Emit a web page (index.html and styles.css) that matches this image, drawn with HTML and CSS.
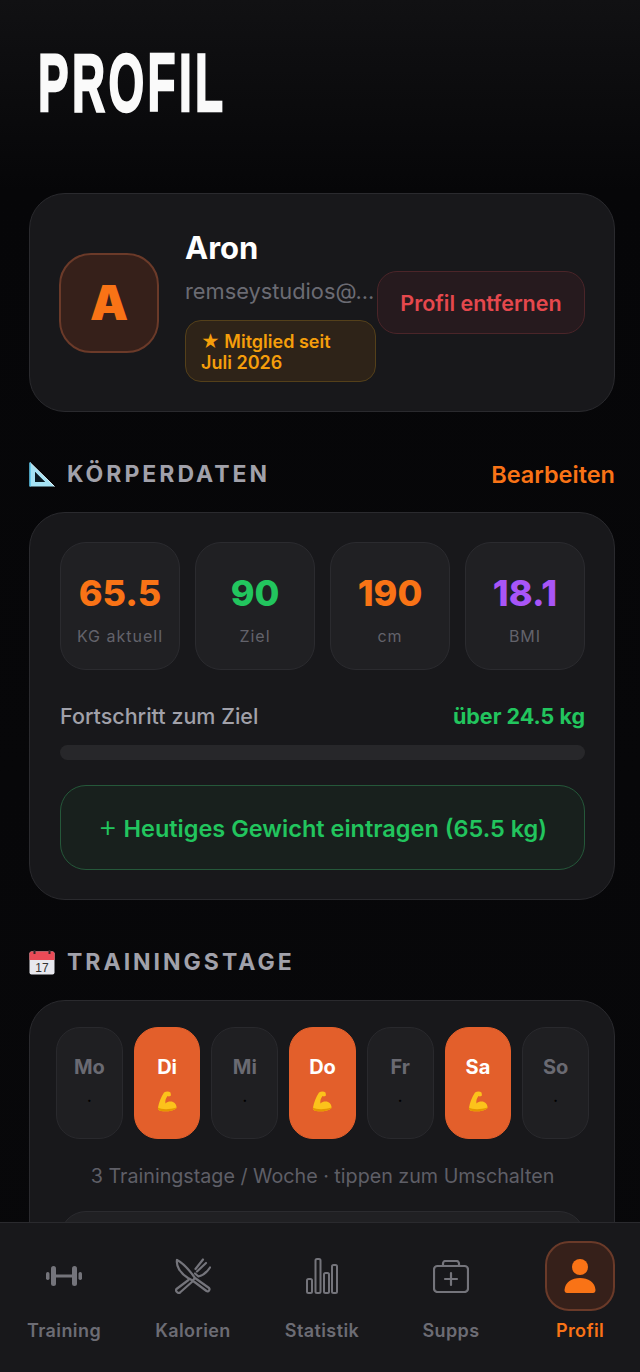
FILE: index.html
```html
<!DOCTYPE html>
<html lang="de">
<head>
<meta charset="utf-8">
<title>Profil</title>
<link rel="stylesheet" href="styles.css">
</head>
<body>
<div class="screen">
  <main class="page">
    <h1 class="title"><span>PROFIL</span></h1>

    <section class="card profile">
      <div class="avatar">A</div>
      <div class="info">
        <div class="name">Aron</div>
        <div class="email">remseystudios@...</div>
        <div class="since">★ Mitglied seit Juli 2026</div>
      </div>
      <button class="remove">Profil entfernen</button>
    </section>

    <div class="section-head">
      <h2>
        <!-- triangular ruler -->
        <svg class="emoji" viewBox="0 0 26 25">
          <path d="M1 0.5 L25.5 24.5 H1 Z M6 10 V20 H16 Z" fill="#a6e3f5" fill-rule="evenodd"/>
          <path d="M1 0.5 L25.5 24.5" stroke="#e4f8ff" stroke-width="1" fill="none"/>
          <path d="M1 0.5 V24.5" stroke="#5cc4e8" stroke-width="1.6" fill="none"/>
          <path d="M6 10 V20 H16 Z" fill="#0a1a22"/>
        </svg>
        KÖRPERDATEN
      </h2>
      <a class="edit">Bearbeiten</a>
    </div>

    <section class="card body-data">
      <div class="stats">
        <div class="stat"><b class="orange">65.5</b><span>KG aktuell</span></div>
        <div class="stat"><b class="green">90</b><span>Ziel</span></div>
        <div class="stat"><b class="orange">190</b><span>cm</span></div>
        <div class="stat"><b class="purple">18.1</b><span>BMI</span></div>
      </div>
      <div class="progress-row">
        <span>Fortschritt zum Ziel</span>
        <b class="green">über 24.5 kg</b>
      </div>
      <div class="bar"></div>
      <button class="log-weight"><span class="plus">+</span> Heutiges Gewicht eintragen (65.5 kg)</button>
    </section>

    <div class="section-head second">
      <h2>
        <!-- calendar -->
        <svg class="emoji" viewBox="0 0 26 25">
          <rect x="0.5" y="1.5" width="25" height="23" rx="2" fill="#e8e8ee"/>
          <path d="M0.5 10 V3.5 a2 2 0 0 1 2 -2 H23.5 a2 2 0 0 1 2 2 V10 Z" fill="#ea4b57"/>
          <rect x="4.5" y="0" width="2" height="4" fill="#33272a"/>
          <rect x="19.5" y="0" width="2" height="4" fill="#33272a"/>
          <text x="13" y="22" class="cal-num">17</text>
        </svg>
        TRAININGSTAGE
      </h2>
    </div>

    <section class="card training">
      <div class="days">
        <div class="day"><b>Mo</b><i>·</i></div>
        <div class="day on"><b>Di</b>
          <svg class="flex" viewBox="0 0 20 21"><use href="#arm"/></svg></div>
        <div class="day"><b>Mi</b><i>·</i></div>
        <div class="day on"><b>Do</b>
          <svg class="flex" viewBox="0 0 20 21"><use href="#arm"/></svg></div>
        <div class="day"><b>Fr</b><i>·</i></div>
        <div class="day on"><b>Sa</b>
          <svg class="flex" viewBox="0 0 20 21"><use href="#arm"/></svg></div>
        <div class="day"><b>So</b><i>·</i></div>
      </div>
      <p class="hint">3 Trainingstage / Woche · tippen zum Umschalten</p>
      <div class="inner-box"></div>
    </section>
  </main>

  <nav class="tabs">
    <a class="tab">
      <span class="tab-icon">
        <svg viewBox="0 0 36 22" width="36" height="22">
          <g fill="#74747b">
            <rect x="0" y="7" width="3.5" height="8" rx="1.7"/>
            <rect x="5" y="1" width="5" height="20" rx="2.5"/>
            <rect x="26" y="1" width="5" height="20" rx="2.5"/>
            <rect x="32.5" y="7" width="3.5" height="8" rx="1.7"/>
            <rect x="10" y="9.5" width="16" height="3"/>
          </g>
        </svg>
      </span>
      Training
    </a>
    <a class="tab">
      <span class="tab-icon">
        <svg viewBox="0 0 36 36" width="36" height="36" fill="none" stroke="#74747b" stroke-width="2.2" stroke-linejoin="round" stroke-linecap="round">
          <path d="M2 2 C8 5 15 13 20 20 L17.5 22.5 L31.5 33 C33 34.5 35.5 32 34 30 L20 20"/>
          <path d="M2 2 C1 8 5 15 13 20 L17.5 22.5"/>
          <path d="M13.5 22 L1.5 31 C0 33 3 36 5 34.5 L18 23"/>
          <path d="M20 15.5 L23.5 18.5 C28 17.5 32 14 35 9.5 M22 13.5 L31 5 M20.5 11 L28 1.5"/>
        </svg>
      </span>
      Kalorien
    </a>
    <a class="tab">
      <span class="tab-icon">
        <svg viewBox="0 0 32 36" width="32" height="36" fill="none" stroke="#74747b" stroke-width="2">
          <rect x="1" y="21" width="5" height="14" rx="1.5"/>
          <rect x="9.5" y="1" width="5" height="34" rx="1.5"/>
          <rect x="18" y="15" width="5" height="20" rx="1.5"/>
          <rect x="26" y="7" width="5" height="28" rx="1.5"/>
        </svg>
      </span>
      Statistik
    </a>
    <a class="tab">
      <span class="tab-icon">
        <svg viewBox="0 0 36 33" width="36" height="33" fill="none" stroke="#74747b" stroke-width="2.2" stroke-linecap="round">
          <rect x="1" y="6" width="34" height="26" rx="3.5"/>
          <path d="M10 6 V3.5 A2.5 2.5 0 0 1 12.5 1 H23.5 A2.5 2.5 0 0 1 26 3.5 V6"/>
          <path d="M18 13 V25 M12 19 H24"/>
        </svg>
      </span>
      Supps
    </a>
    <a class="tab active">
      <span class="tab-icon">
        <svg viewBox="0 0 32 34" width="32" height="34" fill="#f97316">
          <circle cx="16" cy="8" r="8"/>
          <path d="M0.5 31 C1 23 8 19 16 19 C24 19 31 23 31.5 31 C31.5 33 30.5 34 29 34 H3 C1.5 34 0.5 33 0.5 31 Z"/>
        </svg>
      </span>
      Profil
    </a>
  </nav>

  <svg class="defs" width="0" height="0">
    <defs>
      <g id="arm">
        <path d="M7 1.5 C9 0 12 0 13.5 1.5 L14 4.5 L12 5.5 L10.5 5 C8.5 7.5 8 10 8.5 12.5 C10.5 10.5 13.5 10 16 11 C18.5 12 19.8 14.5 19.5 17 C17 19.8 10 21 4 20 C1.5 19.5 0.5 18.5 1 16.5 C2 11 4 6 7 1.5 Z" fill="#fcc21b"/>
        <path d="M1 16.5 C4 18.5 12 19 19.5 16.5 L19.5 17 C17 19.8 10 21 4 20 C1.5 19.5 0.5 18.5 1 16.5 Z" fill="#e59600"/>
      </g>
    </defs>
  </svg>
</div>
</body>
</html>
```

FILE: styles.css
```css
* { box-sizing: border-box; }
body {
  margin: 0;
  background: #08080a;
  font-family: Inter, "Liberation Sans", sans-serif;
  color: #fff;
}
button { font-family: inherit; cursor: pointer; }

.screen {
  position: relative;
  height: 1372px;
  overflow: hidden;
  background: linear-gradient(180deg, #111113 0%, #060608 190px, #08080a 100%);
}
.page { padding: 0 25px 0 29px; }

/* title */
.title {
  height: 193px;
  margin: 0;
  padding-top: 39px;
  font-family: "Liberation Sans", sans-serif;
  font-size: 82px;
  line-height: 88px;
  font-weight: 700;
  letter-spacing: 6px;
  color: #fafafa;
}
.title span {
  display: inline-block;
  margin-left: 9px;
  transform: scaleX(.56);
  transform-origin: left center;
  -webkit-text-stroke: 2.5px #fafafa;
}

/* cards */
.card {
  background: #18181b;
  border: 1px solid #2a2a2e;
  border-radius: 36px;
}
.profile {
  display: flex;
  align-items: center;
  height: 219px;
  padding: 0 29px;
}
.avatar {
  flex: none;
  width: 100px;
  height: 100px;
  border-radius: 32px;
  background: #36201a;
  border: 2px solid #6b3a29;
  display: flex;
  align-items: center;
  justify-content: center;
  font-size: 48px;
  font-weight: 900;
  color: #f97316;
}
.info { flex: none; width: 191px; margin-left: 26px; }
.name { font-size: 31px; font-weight: 700; line-height: 50px; }
.email {
  margin-top: 3px;
  font-size: 21.8px;
  line-height: 30px;
  color: #6b6b73;
  white-space: nowrap;
}
.since {
  margin-top: 14px;
  height: 62px;
  padding: 10px 30px 0 15px;
  font-size: 18px;
  line-height: 21px;
  font-weight: 600;
  color: #f59e0b;
  background: #2e2318;
  border: 1.5px solid #54401a;
  border-radius: 16px;
}
.remove {
  flex: none;
  width: 208px;
  height: 63px;
  margin-left: 1px;
  padding: 0;
  font-size: 21.5px;
  font-weight: 600;
  color: #e5484d;
  background: #261a1e;
  border: 1.5px solid #4b2529;
  border-radius: 20px;
}

/* section heads */
.section-head {
  display: flex;
  align-items: center;
  justify-content: space-between;
  height: 100px;
  padding-top: 24px;
}
.section-head h2 {
  display: flex;
  align-items: center;
  gap: 12px;
  margin: 0;
  font-size: 23px;
  font-weight: 700;
  letter-spacing: 3px;
  color: #a1a1aa;
}
.emoji { width: 26px; height: 25px; flex: none; }
.cal-num {
  font-family: "Liberation Sans", sans-serif;
  font-size: 12px;
  font-weight: 400;
  text-anchor: middle;
  fill: #333;
  letter-spacing: 0;
}
.edit { font-size: 23.5px; font-weight: 600; color: #f97316; }

/* body data */
.body-data { height: 388px; padding: 29px 29px 29px 30px; }
.stats { display: grid; grid-template-columns: repeat(4, 1fr); gap: 15px; }
.stat {
  height: 128px;
  display: flex;
  flex-direction: column;
  align-items: center;
  background: #202023;
  border: 1px solid #2b2b2f;
  border-radius: 26px;
}
.stat b { margin-top: 28px; font-size: 36px; line-height: 44px; font-weight: 800; }
.stat span {
  margin-top: 11px;
  font-size: 16px;
  line-height: 20px;
  letter-spacing: 1px;
  color: #63636b;
}
.orange { color: #f97316; }
.green { color: #22c55e; }
.purple { color: #a855f7; }

.progress-row {
  display: flex;
  justify-content: space-between;
  align-items: center;
  margin-top: 32px;
  height: 28px;
  font-size: 21.5px;
  font-weight: 500;
  color: #a1a1aa;
}
.progress-row b { font-weight: 700; }
.bar { height: 15px; margin-top: 15px; border-radius: 8px; background: #27272a; }
.log-weight {
  display: block;
  width: 100%;
  height: 85px;
  margin-top: 25px;
  padding: 0 0 2px;
  font-size: 23.5px;
  font-weight: 600;
  color: #22c55e;
  background: #18201d;
  border: 1.5px solid #25583a;
  border-radius: 26px;
}
.plus { font-weight: 300; font-size: 30px; line-height: 1; }

/* training days */
.training { height: 320px; padding: 26px 25px 0 26px; }
.days { display: grid; grid-template-columns: repeat(7, 1fr); gap: 11px; }
.day {
  height: 112px;
  display: flex;
  flex-direction: column;
  align-items: center;
  background: #1f1f22;
  border: 1.5px solid #29292d;
  border-radius: 24px;
  color: #6a6a72;
}
.day b { margin-top: 25px; font-size: 20px; line-height: 28px; font-weight: 700; }
.day i { margin-top: 9px; font-style: normal; font-size: 18px; line-height: 22px; color: #000; }
.day.on { background: #e35f2b; border-color: #e35f2b; color: #fff; }
.flex { width: 20px; height: 21px; margin-top: 10px; }
.hint {
  margin: 23px 0 0;
  text-align: center;
  font-size: 19.7px;
  line-height: 28px;
  color: #5f5f67;
}
.inner-box {
  height: 100px;
  margin: 21px 4px 0;
  background: #202023;
  border: 1px solid #2b2b2f;
  border-radius: 26px;
}

/* bottom nav */
.tabs {
  position: absolute;
  left: 0;
  right: 0;
  bottom: 0;
  height: 150px;
  display: flex;
  background: #18181b;
  border-top: 1px solid #2a2a2e;
}
.tab {
  flex: none;
  width: 129px;
  display: flex;
  flex-direction: column;
  align-items: center;
  font-size: 18px;
  font-weight: 600;
  line-height: 24px;
  letter-spacing: .4px;
  color: #6c6c74;
}
.tab:first-child { margin-left: -.5px; }
.tab-icon {
  width: 70px;
  height: 70px;
  margin-top: 18px;
  margin-bottom: 8px;
  display: flex;
  align-items: center;
  justify-content: center;
}
.tab.active { color: #f97316; }
.tab.active .tab-icon {
  background: #36201a;
  border: 2px solid #6a3a29;
  border-radius: 24px;
}
.defs { position: absolute; }
```
